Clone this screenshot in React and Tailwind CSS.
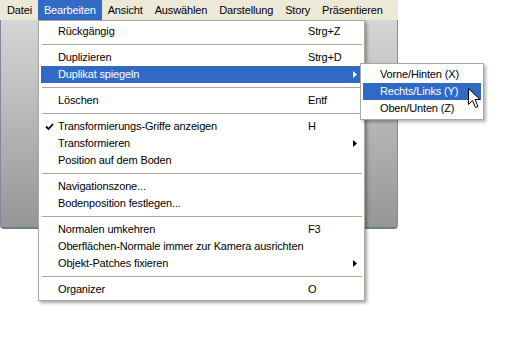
import React from "react";

const font = { fontFamily: '"Liberation Sans", Arial, sans-serif' };

function Arrow({ white }) {
  return (
    <svg width="4" height="7" viewBox="0 0 4 7" className="block">
      <path d="M0 0 L4 3.5 L0 7 Z" fill={white ? "#ffffff" : "#000000"} />
    </svg>
  );
}

function Check() {
  return (
    <svg width="9" height="8" viewBox="0 0 9 8" className="block">
      <path d="M1 3.5 L3.5 6 L8 1" fill="none" stroke="#000" strokeWidth="1.8" />
    </svg>
  );
}

function Item({ label, shortcut, sub, active, checked }) {
  return (
    <div
      className={
        "relative flex h-[17px] items-center leading-[17px] whitespace-nowrap pl-[17px] pr-[5px] " +
        (active ? "bg-[#316ac5] text-white" : "text-black")
      }
    >
      {checked && (
        <span className="absolute left-[4px] top-[5px]">
          <Check />
        </span>
      )}
      <span className="w-[250px] shrink-0">{label}</span>
      {shortcut && <span>{shortcut}</span>}
      {sub && (
        <span className="ml-auto">
          <Arrow white={active} />
        </span>
      )}
    </div>
  );
}

function Sep() {
  return (
    <div className="flex h-[9px] items-center pl-[1px]">
      <div className="h-px w-full bg-[#aca899]" />
    </div>
  );
}

export default function App() {
  const menus = ["Datei", "Bearbeiten", "Ansicht", "Auswählen", "Darstellung", "Story", "Präsentieren"];
  return (
    <div className="relative h-[360px] w-[510px] overflow-hidden bg-white text-[11px] tracking-[-0.15px]" style={font}>
      {/* window */}
      <div className="flex h-[229px] w-[398px] flex-col">
        <div className="flex h-[20px] items-stretch rounded-tr-[3px] bg-[#ece9d8] pl-[1px]">
          {menus.map((m) => (
            <div
              key={m}
              className={
                "flex items-center px-[6px] " + (m === "Bearbeiten" ? "bg-[#316ac5] text-white" : "text-black")
              }
            >
              {m}
            </div>
          ))}
        </div>
        <div className="flex-1 rounded-b-[4px] border-b-2 border-l border-r border-b-[#6b7d90] border-l-[#7d8b99] border-r-[#8a8a8a] bg-gradient-to-b from-[#d6d6d6] to-[#969696]" />
      </div>

      {/* dropdown */}
      <div className="absolute left-[38px] top-[20px] w-[327px] border border-[#aca899] bg-white p-[2px] shadow-[2px_2px_3px_rgba(0,0,0,0.35)]">
        <Item label="Rückgängig" shortcut="Strg+Z" />
        <Sep />
        <Item label="Duplizieren" shortcut="Strg+D" />
        <Item label="Duplikat spiegeln" sub active />
        <Sep />
        <Item label="Löschen" shortcut="Entf" />
        <Sep />
        <Item label="Transformierungs-Griffe anzeigen" shortcut="H" checked />
        <Item label="Transformieren" sub />
        <Item label="Position auf dem Boden" />
        <Sep />
        <Item label="Navigationszone..." />
        <Item label="Bodenposition festlegen..." />
        <Sep />
        <Item label="Normalen umkehren" shortcut="F3" />
        <Item label="Oberflächen-Normale immer zur Kamera ausrichten" />
        <Item label="Objekt-Patches fixieren" sub />
        <Sep />
        <Item label="Organizer" shortcut="O" />
      </div>

      {/* submenu */}
      <div className="absolute left-[360px] top-[63px] w-[124px] border border-[#aca899] bg-white p-[2px] shadow-[2px_2px_3px_rgba(0,0,0,0.3)]">
        {[
          ["Vorne/Hinten (X)", false],
          ["Rechts/Links (Y)", true],
          ["Oben/Unten (Z)", false],
        ].map(([l, a]) => (
          <div
            key={l}
            className={
              "flex h-[17px] items-center whitespace-nowrap pl-[17px] " +
              (a ? "bg-[#316ac5] text-white" : "text-black")
            }
          >
            {l}
          </div>
        ))}
      </div>

      {/* cursor */}
      <svg className="absolute left-[468px] top-[88px]" width="13" height="21" viewBox="0 0 13 21">
        <path
          d="M0.5 0.5 L0.5 16.5 L4.5 12.5 L7.5 19.5 L10 18.5 L7 11.5 L12 11.5 Z"
          fill="#ffffff"
          stroke="#000000"
          strokeWidth="1"
          strokeLinejoin="miter"
        />
      </svg>
    </div>
  );
}
